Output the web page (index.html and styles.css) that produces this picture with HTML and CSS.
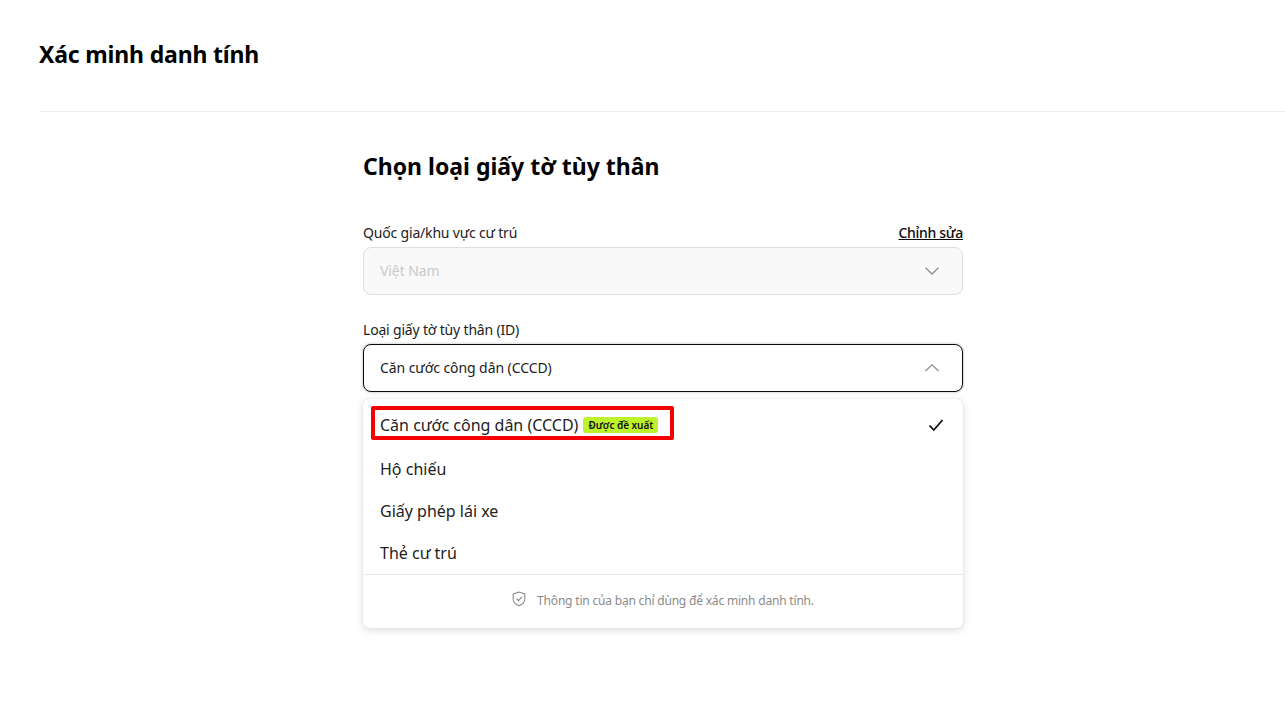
FILE: index.html
```html
<!DOCTYPE html>
<html lang="vi">
<head>
<meta charset="utf-8">
<title>Xác minh danh tính</title>
<link rel="stylesheet" href="styles.css">
</head>
<body>
<header class="page-header"><h1 class="page-title">Xác minh danh tính</h1></header>
<main class="content">
  <h2 class="form-title">Chọn loại giấy tờ tùy thân</h2>
  <div class="label-row label-first">
    <span class="label">Quốc gia/khu vực cư trú</span>
    <a class="edit-link" href="#">Chỉnh sửa</a>
  </div>
  <div class="select select-disabled">
    <span>Việt Nam</span>
    <svg class="chev" width="16" height="16" viewBox="0 0 16 16"><path d="M1.5 4.8 8 11 14.5 4.8" fill="none" stroke="#8f8f8f" stroke-width="1.3"/></svg>
  </div>
  <div class="label-row label-second"><span class="label">Loại giấy tờ tùy thân (ID)</span></div>
  <div class="select select-open">
    <span>Căn cước công dân (CCCD)</span>
    <svg class="chev" width="16" height="16" viewBox="0 0 16 16"><path d="M1.5 11 8 4.8 14.5 11" fill="none" stroke="#8f8f8f" stroke-width="1.3"/></svg>
  </div>
  <div class="menu">
    <ul class="options">
      <li class="option option-first">
        <span class="option-main">Căn cước công dân (CCCD)<span class="badge">Được đề xuất</span></span>
        <svg class="check" width="16" height="16" viewBox="0 0 16 16"><path d="M1.5 8.5 5.8 13 14.5 3" fill="none" stroke="#111" stroke-width="1.8"/></svg>
        <span class="highlight"></span>
      </li>
      <li class="option">Hộ chiếu</li>
      <li class="option">Giấy phép lái xe</li>
      <li class="option">Thẻ cư trú</li>
    </ul>
    <div class="menu-foot">
      <svg class="shield" width="14" height="16" viewBox="0 0 14 16"><path d="M7 1 12.8 3v5.2c0 3-2.6 5.2-5.8 6.6C3.8 13.400 1.200 11.200 1.200 8.200V3z" fill="none" stroke="#8a8a8a" stroke-width="1.100"/><path d="M4.400 7.600 6.400 9.600 9.800 6" fill="none" stroke="#8a8a8a" stroke-width="1.100"/></svg>
      <span class="foot-text">Thông tin của bạn chỉ dùng để xác minh danh tính.</span>
    </div>
  </div>
</main>
</body>
</html>
```
FILE: styles.css
```css
* { box-sizing: border-box; }
html, body { margin: 0; padding: 0; background: #fff; }
body { font-family: "Noto Sans", "Open Sans", sans-serif; color: #111; height: 727px; overflow: hidden; }
.page-header { margin-left: 39px; height: 112px; border-bottom: 1px solid #ececec; padding-top: 38px; }
.page-title { margin: 0; font-size: 23px; line-height: 33px; font-weight: 700; color: #000; letter-spacing: -0.17px; }
.content { width: 600px; margin-left: 363px; padding-top: 38px; }
.form-title { margin: 0; font-size: 23px; line-height: 33px; font-weight: 700; color: #000; }
.label-row { display: flex; justify-content: space-between; align-items: center; height: 20px; font-size: 14px; line-height: 20px; color: #222; letter-spacing: -0.18px; }
.label-first { margin-top: 40px; }
.label-second { margin-top: 25px; }
.edit-link { color: #0a0a0a; text-decoration: underline; font-weight: 500; letter-spacing: -0.3px; }
.select { margin-top: 4px; height: 48px; border-radius: 8px; padding: 0 22px 1px 16px; display: flex; align-items: center; justify-content: space-between; font-size: 14px; letter-spacing: -0.08px; }
.select-disabled { background: #f9f9f9; border: 1px solid #dedede; color: #c9c9c9; }
.select-open { background: #fff; border: 1px solid #0a0a0a; color: #222; box-shadow: 0 0 3px rgba(0,0,0,.3); }
.menu { margin-top: 7px; height: 229px; background: #fff; border-radius: 6px; box-shadow: 0 0 1px rgba(0,0,0,.2), 0 2px 8px rgba(0,0,0,.14); display: flex; flex-direction: column; }
.options { list-style: none; margin: 0; padding: 4px 0 0; flex: 1; }
.option { height: 42px; padding: 0 17px; display: flex; align-items: center; font-size: 16px; color: #222; }
.option-first { position: relative; height: 45px; justify-content: space-between; padding-right: 19px; padding-bottom: 1px; }
.option-main { display: flex; align-items: center; }
.badge { margin-left: 5px; height: 16px; padding: 0 5px; background: #bcf32a; border-radius: 3px; font-size: 10px; line-height: 17px; font-weight: 600; color: #111; letter-spacing: -0.05px; }
.highlight { position: absolute; left: 8px; top: 3px; width: 303px; height: 34px; border: 4px solid #f40000; border-radius: 2px; }
.menu-foot { height: 55px; border-top: 1px solid #e8e8e8; display: flex; align-items: center; justify-content: center; gap: 11px; font-size: 12px; color: #8a8a8a; padding-bottom: 2px; }
.foot-text { letter-spacing: -0.19px; }
.shield { margin-top: -3px; }
```
